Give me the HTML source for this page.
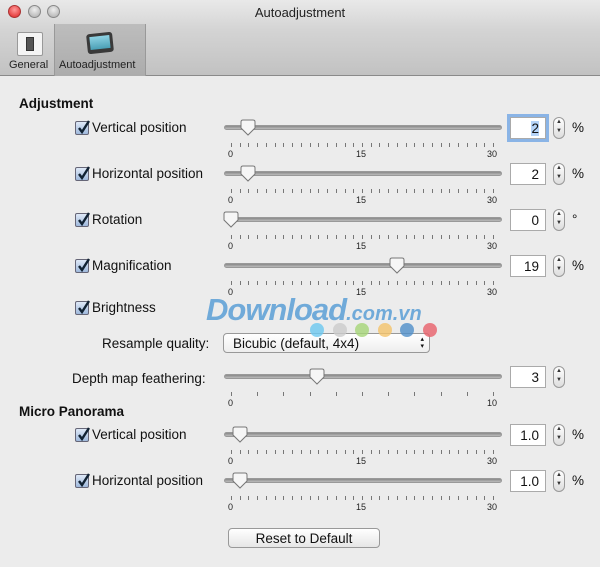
<!DOCTYPE html>
<html><head><meta charset="utf-8"><style>
*{margin:0;padding:0;box-sizing:border-box}
body{width:600px;height:567px;background:#ececec;font-family:"Liberation Sans",sans-serif;font-size:13.5px;color:#111;position:relative;overflow:hidden}
.a{position:absolute;white-space:nowrap}
#tb{position:absolute;left:0;top:0;width:600px;height:76px;background:linear-gradient(#e9e9e9,#d4d4d4 40%,#c2c2c2);border-bottom:1px solid #8a8a8a}
.dot{position:absolute;top:5px;width:13px;height:13px;border-radius:50%;background:radial-gradient(circle at 50% 35%,#eee,#aaa);border:1px solid #888}
.track{position:absolute;height:5px;border-radius:3px;background:linear-gradient(#888,#bbb);border:1px solid #999}
.tick{position:absolute;width:1px;height:4px;background:#777}
.lbl{position:absolute;font-size:9px;color:#222}
.thumb{position:absolute;width:18px;height:18px}
.fld{position:absolute;width:36px;height:22px;background:#fff;border:1px solid #aaa;text-align:right;padding:3px 6px 0 0;font-size:13.5px}
.step{position:absolute;width:12px;height:22px;border:1px solid #999;border-radius:6px;background:linear-gradient(#fff,#ddd);font-size:6px;text-align:center;line-height:9px;color:#333}
.cb{position:absolute;width:14px;height:14px;border:1px solid #667;border-radius:2px;background:linear-gradient(#dfe9f7,#9fb9dc)}
.cb svg{position:absolute;left:0;top:-3px}
b{font-weight:bold}
</style></head><body>
<div id="tb">
 <div class="dot" style="left:8px;background:radial-gradient(circle at 50% 35%,#f99,#d22);border-color:#a33"></div>
 <div class="dot" style="left:28px"></div>
 <div class="dot" style="left:47px"></div>
 <div class="a" style="left:0;width:600px;text-align:center;top:5px;font-size:13px;color:#222">Autoadjustment</div>
 <div class="a" style="left:54px;top:24px;width:92px;height:52px;background:linear-gradient(#bdbdbd,#acacac);border-left:1px solid #999;border-right:1px solid #999"></div>
 <div class="a" style="left:17px;top:32px;width:26px;height:24px;background:#f4f4f4;border:1px solid #999;border-radius:2px"><div style="position:absolute;left:8px;top:4px;width:8px;height:14px;background:#555;border:1px solid #333"></div></div>
 <div class="a" style="left:87px;top:33px;width:26px;height:20px;background:#3a3a3a;border-radius:3px;transform:rotate(-6deg)"><div style="position:absolute;left:3px;top:3px;width:20px;height:13px;background:linear-gradient(#8fd3e4,#4a9fb5)"></div></div>
 <div class="a" style="left:9px;top:59px;font-size:11px;color:#222">General</div>
 <div class="a" style="left:59px;top:59px;font-size:11px;color:#222">Autoadjustment</div>
</div>
<div class="a" style="left:19px;top:96px"><b>Adjustment</b></div>
<div class="a" style="left:19px;top:404px"><b>Micro Panorama</b></div>
<div class="a" style="left:102px;top:336px">Resample quality:</div>
<div class="a" style="left:72px;top:371px">Depth map feathering:</div>
<div class="a" style="left:223px;top:333px;width:207px;height:20px;background:linear-gradient(#fff,#eee);border:1px solid #999;border-radius:4px;padding:2px 0 0 9px">Bicubic (default, 4x4)<span style="position:absolute;right:5px;top:2px;font-size:7px;line-height:7px">▴<br>▾</span></div>
<div class="a" style="left:206px;top:292px;font:italic bold 31px 'Liberation Sans',sans-serif;color:#5b9fd6;opacity:.85;letter-spacing:-1px">Download<span style="font-size:20px;letter-spacing:0">.com.vn</span></div>
<div class="a" style="left:228px;top:528px;width:152px;height:20px;background:linear-gradient(#fff,#e6e6e6);border:1px solid #999;border-radius:4px;text-align:center;padding-top:2px">Reset to Default</div>
<div id="c"></div>
<script>
var c=document.getElementById('c'),h='';
function slider(y,v,max,ticks){
 h+='<div class="track" style="left:224px;top:'+(y-3)+'px;width:278px"></div>';
 for(var i=0;i<=ticks;i++){var x=231+i*262/ticks;h+='<div class="tick" style="left:'+Math.round(x)+'px;top:'+(y+15)+'px"></div>';}
 var labs=max==30?[[0,'0'],[15,'15'],[30,'30']]:[[0,'0'],[10,'10']];
 labs.forEach(function(l){var x=231+l[0]/max*262;h+='<div class="lbl" style="left:'+(Math.round(x)-(l[1].length*3))+'px;top:'+(y+21)+'px">'+l[1]+'</div>';});
 var tx=231+v/max*262;
 h+='<svg class="thumb" style="left:'+(tx-9)+'px;top:'+(y-10)+'px" viewBox="0 0 18 18"><path d="M2 4q0-2 2-2h10q2 0 2 2v6l-7 7-7-7z" fill="#f6f6f6" stroke="#777"/></svg>';
}
function field(y,val,unit,foc){
 h+='<div class="fld" style="left:510px;top:'+(y-11)+'px;'+(foc?'box-shadow:0 0 0 3px #8ab4e6;':'')+'">'+(foc?'<span style="background:#b5d3f7">'+val+'</span>':val)+'</div>';
 h+='<div class="step" style="left:553px;top:'+(y-11)+'px">▲<br>▼</div>';
 h+='<div class="a" style="left:572px;top:'+(y-8)+'px">'+unit+'</div>';
}
function check(y,t){
 h+='<div class="cb" style="left:75px;top:'+(y-7)+'px"><svg width="16" height="16"><path d="M3 9l3 4 7-11" stroke="#123" stroke-width="2.4" fill="none"/></svg></div>';
 h+='<div class="a" style="left:92px;top:'+(y-8)+'px">'+t+'</div>';
}
check(128,'Vertical position');slider(128,2,30,30);field(128,'2','%',1);
check(174,'Horizontal position');slider(174,2,30,30);field(174,'2','%');
check(220,'Rotation');slider(220,0,30,30);field(220,'0','°');
check(266,'Magnification');slider(266,19,30,30);field(266,'19','%');
check(308,'Brightness');
slider(377,3.3,10,10);field(377,'3','');
check(435,'Vertical position');slider(435,1,30,30);field(435,'1.0','%');
check(481,'Horizontal position');slider(481,1,30,30);field(481,'1.0','%');
var cols=['#6cc8f0','#ccc','#a6d678','#f4c36a','#4f8fc9','#e8606a'];
cols.forEach(function(cl,i){h+='<div class="a" style="left:'+(310+i*22.5)+'px;top:323px;width:14px;height:14px;border-radius:50%;background:'+cl+';opacity:.8"></div>';});
c.innerHTML=h;
</script>
</body></html>
